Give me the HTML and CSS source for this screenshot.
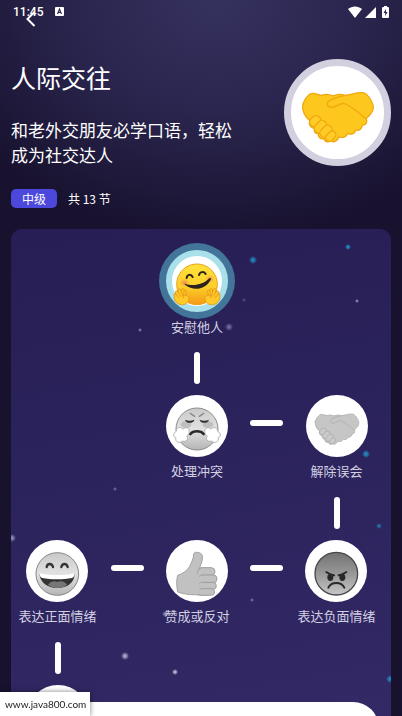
FILE: index.html
```html
<!DOCTYPE html>
<html lang="zh-CN">
<head>
    <meta charset="UTF-8">
    <meta name="viewport" content="width=device-width, initial-scale=1.0">
    <title>人际交往</title>
    <link rel="stylesheet" href="styles.css">
</head>
<body>

    <!-- Emoji shapes shared by the hero and the lesson nodes -->
    <svg class="sprites" width="0" height="0" aria-hidden="true">
        <defs>
            <linearGradient id="yellow" x1="0" y1="0" x2="0" y2="1">
                <stop offset="0" stop-color="#ffe13a"/>
                <stop offset="0.55" stop-color="#fdd02b"/>
                <stop offset="1" stop-color="#f39a16"/>
            </linearGradient>
            <linearGradient id="pale" x1="0" y1="0" x2="0" y2="1">
                <stop offset="0" stop-color="#c9c9c9"/>
                <stop offset="0.5" stop-color="#e2e2e2"/>
                <stop offset="1" stop-color="#b5b5b5"/>
            </linearGradient>
            <linearGradient id="dark" x1="0" y1="0" x2="0" y2="1">
                <stop offset="0" stop-color="#727272"/>
                <stop offset="0.5" stop-color="#989898"/>
                <stop offset="1" stop-color="#c6c6c6"/>
            </linearGradient>
            <radialGradient id="blush">
                <stop offset="0" stop-color="#f57c51" stop-opacity="0.8"/>
                <stop offset="1" stop-color="#f57c51" stop-opacity="0"/>
            </radialGradient>
        </defs>

        <symbol id="handshake" viewBox="0 0 144 144">
            <g stroke="#f0a810" stroke-width="2.4" stroke-linecap="round" stroke-linejoin="round">
                <path fill="#fec71e" d="M7 49C10 40 15 33 21 29C27 26 35 31 42 32C49 29 56 30 63 33C71 29 79 30 85 32C96 31 106 26 119 27C127 29 134 41 137 51C139 61 131 69 124 75C127 81 124 87 117 87C116 94 111 98 105 96C103 103 96 106 90 102C88 109 80 112 74 108C72 116 64 120 58 116C53 120 47 117 46 112C40 114 34 109 36 103C30 103 26 98 29 93C22 93 17 86 20 79C11 72 5 60 7 49Z"/>
                <path fill="none" d="M85 32C77 34 62 37 55 43C49 48 54 56 62 54C69 53 75 47 82 47C94 49 111 65 123 75"/>
                <rect fill="#ffcb27" x="21" y="69" width="18" height="22" rx="9" transform="rotate(43 30 80)"/>
                <rect fill="#ffcb27" x="31" y="77" width="17" height="25" rx="8" transform="rotate(43 39 90)"/>
                <rect fill="#ffcb27" x="42" y="86" width="16" height="25" rx="8" transform="rotate(43 50 98)"/>
                <rect fill="#ffcb27" x="52" y="97" width="14" height="21" rx="7" transform="rotate(43 59 107)"/>
            </g>
        </symbol>

        <symbol id="hug" viewBox="0 0 144 144">
            <circle cx="72" cy="73" r="61" fill="url(#yellow)" stroke="#eda01a" stroke-width="3"/>
            <ellipse cx="34" cy="68" rx="15" ry="13" fill="url(#blush)"/>
            <ellipse cx="111" cy="57" rx="14" ry="12" fill="url(#blush)"/>
            <g fill="none" stroke="#2c231c" stroke-width="6" stroke-linecap="round">
                <path d="M41 54C42 43 54 41 59 51"/>
                <path d="M78 45C81 34 93 34 98 42"/>
            </g>
            <path fill="#2c231c" d="M37 71C59 80 90 75 109 55C112 52 115 55 113 59C99 88 62 94 38 76C34 73 34 70 37 71Z"/>
            <g id="hug-hand" fill="#ffc928" stroke="#e29313" stroke-width="2.4" stroke-linecap="round" stroke-linejoin="round">
                <path d="M7 97C6 92 11 91 14 95L17 99L15 91C14 86 20 84 23 89L25 94L26 88C28 84 33 85 33 90L33 94C37 88 43 91 40 97L37 105C43 105 49 111 48 118C46 129 37 135 25 134C13 132 6 125 4 116L3 105C3 101 6 100 8 103Z"/>
                <path fill="none" d="M8 102L17 113M17 99L24 110M25 94L29 108M33 94L32 107M37 105C33 107 31 110 30 114"/>
            </g>
            <use href="#hug-hand" transform="translate(144 0) scale(-1 1)"/>
        </symbol>

        <symbol id="huff" viewBox="0 0 144 144">
            <circle cx="72" cy="72" r="63" fill="url(#pale)" stroke="#8b8b8b" stroke-width="3"/>
            <ellipse cx="39" cy="59" rx="16" ry="10" fill="#aaa" opacity="0.6"/>
            <ellipse cx="105" cy="59" rx="16" ry="10" fill="#aaa" opacity="0.6"/>
            <g fill="none" stroke="#888" stroke-width="4" stroke-linecap="round">
                <path d="M52 25L65 34M92 25L79 34"/>
            </g>
            <g fill="#303030">
                <path d="M36 44C45 48 54 49 64 44C64 55 40 58 36 44Z"/>
                <path d="M80 44C90 49 99 48 108 44C104 58 80 55 80 44Z"/>
            </g>
            <path fill="none" stroke="#292929" stroke-width="8" stroke-linecap="round" d="M52 87C61 76 83 76 92 87"/>
            <g id="steam" fill="#fff" stroke="#aaa" stroke-width="2.5">
                <path d="M48 74C42 65 33 68 31 73C22 63 9 68 10 79C-1 84 0 97 9 98C4 111 21 117 28 108C40 113 48 101 41 94C46 89 51 83 48 74Z"/>
            </g>
            <use href="#steam" transform="translate(144 0) scale(-1 1)"/>
        </symbol>

        <symbol id="laugh" viewBox="0 0 144 144">
            <circle cx="73" cy="72" r="64" fill="url(#pale)" stroke="#858585" stroke-width="3"/>
            <g fill="none" stroke="#333" stroke-width="7" stroke-linecap="round">
                <path d="M41 51C43 39 57 39 60 51M85 51C88 39 101 39 104 51"/>
            </g>
            <path fill="#343434" d="M19 72C46 78 98 78 125 71C125 98 102 114 73 114C43 114 22 98 19 72Z"/>
            <path fill="#fff" d="M20 70C48 77 97 77 124 70C126 75 123 82 117 84C91 89 53 89 28 84C21 82 19 76 20 70Z"/>
            <path fill="#777" d="M45 105C56 90 66 94 73 96C80 94 92 90 102 105C86 116 62 117 45 105Z"/>
        </symbol>

        <symbol id="thumb" viewBox="0 0 144 144">
            <g fill="#c1c1c1" stroke="#989898" stroke-width="2.5" stroke-linejoin="round">
                <path d="M62 11C65 4 84 6 88 16C91 28 83 45 80 54L116 54L116 132C101 136 84 137 68 134C46 135 25 130 14 126C10 106 10 89 14 76C29 71 43 62 50 49C56 37 62 25 62 11Z"/>
                <rect x="76" y="53" width="50" height="23" rx="11"/>
                <rect x="76" y="75" width="56" height="23" rx="11"/>
                <rect x="76" y="97" width="54" height="21" rx="10"/>
                <rect x="76" y="116" width="49" height="20" rx="10"/>
            </g>
            <path fill="#c1c1c1" d="M70 59H84V75L78 78L84 97L78 101L83 116L78 121L82 132H66Z"/>
            <path fill="none" stroke="#989898" stroke-width="2.5" stroke-linecap="round" d="M80 54C75 60 73 65 73 70"/>
        </symbol>

        <symbol id="angry" viewBox="0 0 144 144">
            <circle cx="73" cy="71" r="64" fill="url(#dark)" stroke="#484848" stroke-width="4"/>
            <g fill="#292929">
                <ellipse cx="55" cy="82" rx="9" ry="11"/>
                <ellipse cx="91" cy="82" rx="9" ry="11"/>
            </g>
            <g fill="none" stroke="#292929" stroke-linecap="round">
                <path stroke-width="6" d="M43 66C49 70 55 75 66 76M103 66C97 70 91 75 80 76"/>
                <path stroke-width="6" d="M49 113C58 94 88 94 97 113"/>
            </g>
        </symbol>
    </svg>

    <div class="screen">
        <div class="status-bar">
            <span class="clock">11:45</span>
            <svg class="badge-a" width="9" height="10" viewBox="0 0 9 10" aria-hidden="true">
                <rect width="9" height="9" y="0" rx="1" fill="#fff"/>
                <path d="M2.5 7L4.5 2L6.5 7M3.2 5.4H5.8" fill="none" stroke="#2c2753" stroke-width="1.1"/>
            </svg>
            <div class="status-icons">
                <svg width="14" height="12" viewBox="0 0 14 12" aria-hidden="true">
                    <path fill="#fff" d="M0 3C4 -0.5 10 -0.5 14 3L7 12Z"/>
                </svg>
                <svg width="11" height="12" viewBox="0 0 11 12" aria-hidden="true">
                    <path fill="#fff" d="M11 1V12H0Z"/>
                </svg>
                <svg class="battery" width="7" height="12" viewBox="0 0 7 12" aria-hidden="true">
                    <path fill="#fff" d="M2 0H5V1H6Q7 1 7 2V11Q7 12 6 12H1Q0 12 0 11V2Q0 1 1 1H2Z"/>
                    <path fill="#2c2753" d="M4 3L1.5 7H3.2V10L5.6 6H4Z"/>
                </svg>
            </div>
            <button class="back" type="button" aria-label="返回">
                <svg width="10" height="16" viewBox="0 0 10 16" aria-hidden="true">
                    <path d="M8.500 1L1.500 8L8.500 15" fill="none" stroke="#fff" stroke-width="2"/>
                </svg>
            </button>
        </div>

        <header class="header">
            <div class="intro">
                <h1>人际交往</h1>
                <p class="summary">和老外交朋友必学口语，轻松成为社交达人</p>
                <div class="meta">
                    <span class="level">中级</span>
                    <span class="count">共 13 节</span>
                </div>
            </div>
            <div class="cover">
                <svg class="cover-emoji" aria-hidden="true"><use href="#handshake"/></svg>
            </div>
        </header>

        <main class="map">
            <button class="node col-mid active" type="button">
                <span class="disc"><svg class="emoji"><use href="#hug"/></svg></span>
                <span class="label">安慰他人</span>
            </button>

            <span class="link-down col-mid"></span>

            <button class="node col-mid" type="button">
                <span class="disc"><svg class="emoji"><use href="#huff"/></svg></span>
                <span class="label">处理冲突</span>
            </button>
            <span class="link-across"></span>
            <button class="node col-right" type="button">
                <span class="disc"><svg class="emoji gray"><use href="#handshake"/></svg></span>
                <span class="label">解除误会</span>
            </button>

            <span class="link-down col-right"></span>

            <button class="node col-left" type="button">
                <span class="disc"><svg class="emoji"><use href="#laugh"/></svg></span>
                <span class="label">表达正面情绪</span>
            </button>
            <span class="link-across"></span>
            <button class="node col-mid" type="button">
                <span class="disc"><svg class="emoji"><use href="#thumb"/></svg></span>
                <span class="label">赞成或反对</span>
            </button>
            <span class="link-across"></span>
            <button class="node col-right" type="button">
                <span class="disc"><svg class="emoji"><use href="#angry"/></svg></span>
                <span class="label">表达负面情绪</span>
            </button>

            <span class="link-down col-left"></span>

            <button class="node col-left" type="button" aria-label="下一节">
                <span class="disc"></span>
            </button>
        </main>
    </div>

    <div class="sheet"></div>
    <div class="site-tip">www.java800.com</div>

</body>
</html>
```

FILE: styles.css
```css
* {
    box-sizing: border-box;
}

body {
    margin: 0;
    background-color: #18122f;
    color: #fff;
    font-family: "Noto Sans CJK SC", sans-serif;
}

button {
    padding: 0;
    border: none;
    background: none;
    color: inherit;
    font: inherit;
    cursor: pointer;
}

.sprites {
    position: absolute;
}

.screen {
    height: 100vh;
    overflow-y: auto;
    scrollbar-width: none;
    background: radial-gradient(ellipse 300px 240px at 54% 0, #36325f, #2b264f 45%, #18122f);
}

/* Status bar */
.status-bar {
    position: relative;
    display: flex;
    align-items: center;
    height: 23px;
    padding: 0 13px;
}

.clock {
    font-family: Roboto, sans-serif;
    font-size: 12px;
    font-weight: 500;
}

.badge-a {
    margin-left: 12px;
}

.status-icons {
    display: flex;
    gap: 3px;
    margin-left: auto;
}

.battery {
    margin-left: 3px;
}

.back {
    position: absolute;
    top: 11px;
    left: 26px;
    height: 16px;
}

.back svg {
    display: block;
}

/* Course header */
.header {
    display: flex;
    gap: 40px;
    padding: 36px 11px 21px;
}

.intro {
    flex: 1;
}

.header h1 {
    margin: 0;
    font-size: 25px;
    font-weight: 400;
    line-height: 36px;
}

.summary {
    margin: 22px 0;
    font-size: 17px;
    line-height: 25px;
}

.meta {
    display: flex;
    gap: 11px;
    font-size: 12px;
    line-height: 19px;
}

.level {
    padding: 0 11px;
    border-radius: 5px;
    background-color: #4c48dc;
}

.cover {
    display: flex;
    align-items: center;
    justify-content: center;
    flex-shrink: 0;
    width: 107px;
    height: 107px;
    padding-top: 8px;
    border: 7px solid #d2d0de;
    border-radius: 50%;
    background-color: #fff;
}

.cover-emoji {
    width: 78px;
    height: 78px;
}

/* Lesson map, stars are painted behind the nodes */
.map {
    display: grid;
    grid-template-columns: 2fr 1fr 2fr 1fr 2fr;
    justify-items: center;
    margin: 0 11px;
    padding: 14px 8px 60px 0;
    border-radius: 11px;
    background:
        radial-gradient(circle at 242px 31px, #2485be 1px, transparent 4px),
        radial-gradient(circle at 337px 18px, #2485be 1px, transparent 3px),
        radial-gradient(circle at 233px 71px, #5d568a 0, transparent 2px),
        radial-gradient(circle at 346px 72px, #b3add0 0, transparent 2px),
        radial-gradient(circle at 218px 98px, #6f6898 1px, transparent 4px),
        radial-gradient(circle at 129px 101px, #a19bc4 0, transparent 2px),
        radial-gradient(circle at 355px 225px, #2485be 1px, transparent 4px),
        radial-gradient(circle at 104px 260px, #8580ab 0, transparent 2px),
        radial-gradient(circle at 368px 297px, #2485be 0, transparent 3px),
        radial-gradient(circle at 1px 309px, #8b85b2 1px, transparent 4px),
        radial-gradient(circle at 241px 371px, #8b85b2 0, transparent 2px),
        radial-gradient(circle at 154px 385px, #a19bc4 0, transparent 3px),
        radial-gradient(circle at 114px 427px, #aaa3ce 1px, transparent 4px),
        radial-gradient(circle at 164px 443px, #b3add0 1px, transparent 3px),
        radial-gradient(circle at 379px 450px, #2485be 1px, transparent 4px),
        linear-gradient(170deg, #261e54, #342b68);
}

.col-left {
    grid-column: 1;
}

.col-mid {
    grid-column: 3;
}

.col-right {
    grid-column: 5;
}

.node {
    display: flex;
    flex-direction: column;
    align-items: center;
}

.disc {
    display: flex;
    align-items: center;
    justify-content: center;
    width: 62px;
    height: 62px;
    padding-top: 6px;
    border-radius: 50%;
    background-color: #fff;
}

.emoji {
    flex-shrink: 0;
    width: 48px;
    height: 48px;
}

.gray {
    filter: grayscale(1);
}

.label {
    margin: 6px 0 1px;
    color: #d3d0e2;
    font-size: 13px;
    line-height: 16px;
    white-space: nowrap;
}

.active .disc {
    margin: 7px;
    border: 6px solid #a9e0e9;
    box-shadow: 0 0 0 7px #427599;
}

.active .label {
    margin: 0;
}

.link-down {
    width: 6px;
    height: 32px;
    margin: 17px 0 11px;
    border-radius: 3px;
    background-color: #fff;
}

.link-across {
    width: 33px;
    height: 6px;
    margin-top: 25px;
    border-radius: 3px;
    background-color: #fff;
}

/* Floating parts over the map */
.sheet {
    position: fixed;
    top: calc(100% - 14px);
    right: 23px;
    left: 23px;
    height: 60px;
    border-radius: 26px 26px 0 0;
    background-color: #fff;
}

.site-tip {
    position: fixed;
    bottom: 0;
    left: 0;
    padding: 0 4px 0 5px;
    background-color: #fff;
    box-shadow: 0 0 5px rgba(0, 0, 0, 0.5);
    color: #222;
    font-family: Lato, sans-serif;
    font-size: 10px;
    line-height: 24px;
}
```
